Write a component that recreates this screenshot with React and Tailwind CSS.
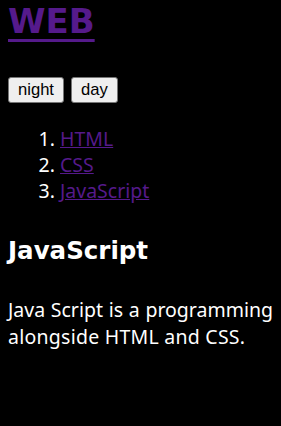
export default function App() {
  const topics = ['HTML', 'CSS', 'JavaScript'];
  return (
    <div className="min-h-screen bg-black px-2 text-white" style={{ fontFamily: '"Noto Sans", "Noto Sans CJK KR", sans-serif' }}>
      <h1 className="m-0 font-['DejaVu_Sans','Noto_Sans_CJK_KR',sans-serif] text-[34px] font-bold leading-[42px]">
        <a href="#" className="text-[#551a8b] underline decoration-[3px] underline-offset-[6px]">WEB</a>
      </h1>
      <div className="mt-[35px] flex gap-[7px]">
        <button className="h-[26px] rounded-[3px] border border-[#767676] bg-[#efefef] px-[9px] font-['Liberation_Sans',Arial,sans-serif] text-[16.6px] text-black">night</button>
        <button className="h-[26px] rounded-[3px] border border-[#767676] bg-[#efefef] px-[9px] font-['Liberation_Sans',Arial,sans-serif] text-[16.6px] text-black">day</button>
      </div>
      <ol className="mt-[23px] list-decimal pl-[52px] text-[19.5px] leading-[26px]">
        {topics.map((t) => (
          <li key={t}>
            <a href="#" className="text-[#551a8b] underline">{t}</a>
          </li>
        ))}
      </ol>
      <h2 className="mt-[31px] font-['DejaVu_Sans','Noto_Sans_CJK_KR',sans-serif] text-[24.5px] font-bold leading-[32px]">JavaScript</h2>
      <p className="mt-[29px] text-[19.5px] leading-[27px]">
        <span className="block text-justify [text-align-last:justify]">Java Script is a programming</span>
        <span className="block tracking-[0.25px]">alongside HTML and CSS.</span>
      </p>
    </div>
  );
}
